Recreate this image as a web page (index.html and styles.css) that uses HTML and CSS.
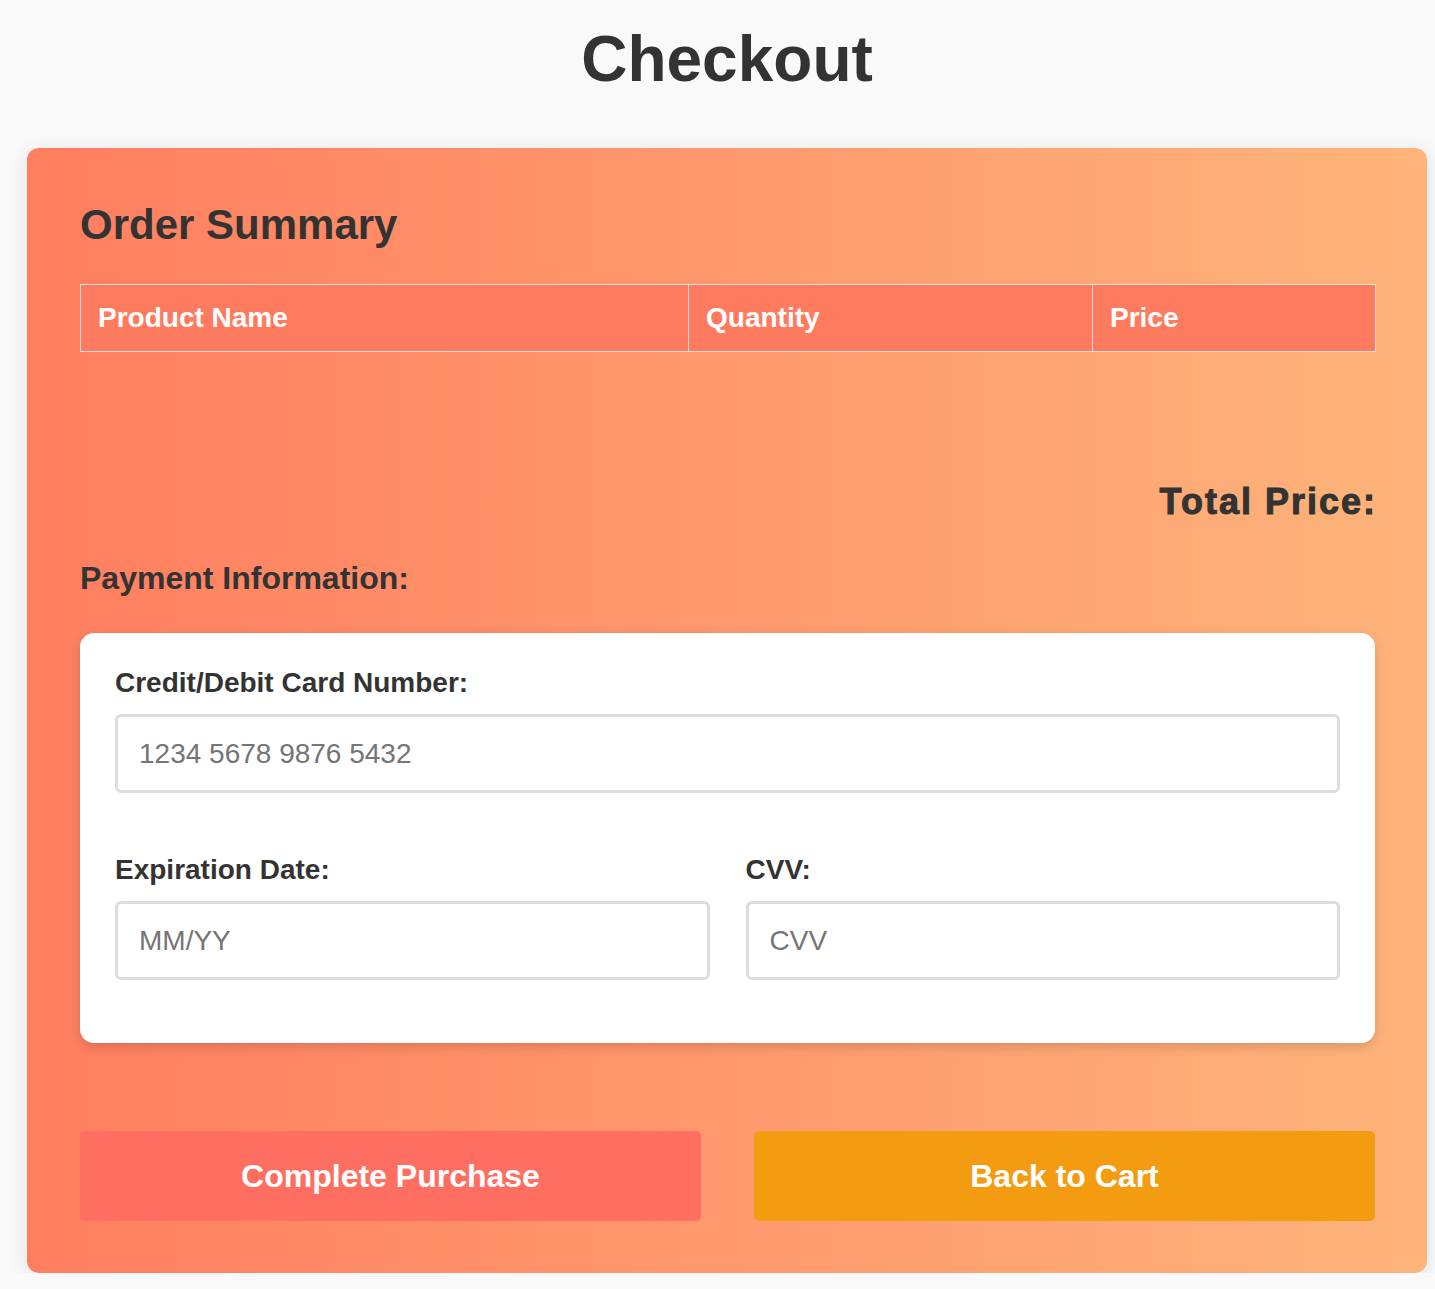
FILE: index.html
```html
<!DOCTYPE html>
<html lang="en">
<head>
<meta charset="utf-8">
<title>Checkout</title>
<link rel="stylesheet" href="styles.css">
</head>
<body>
<div class="page">
  <h1 class="title">Checkout</h1>
  <div class="checkout-card">
    <h2 class="section-title">Order Summary</h2>
    <table class="order-table">
      <colgroup>
        <col class="col-name">
        <col class="col-qty">
        <col class="col-price">
      </colgroup>
      <thead>
        <tr>
          <th>Product Name</th>
          <th>Quantity</th>
          <th>Price</th>
        </tr>
      </thead>
      <tbody></tbody>
    </table>
    <div class="total">Total Price: <span class="total-value"></span></div>
    <h3 class="payment-title">Payment Information:</h3>
    <form class="payment-form">
      <div class="form-group first">
        <label for="card">Credit/Debit Card Number:</label>
        <input id="card" type="text" placeholder="1234 5678 9876 5432">
      </div>
      <div class="form-row">
        <div class="form-group">
          <label for="exp">Expiration Date:</label>
          <input id="exp" type="text" placeholder="MM/YY">
        </div>
        <div class="form-group">
          <label for="cvv">CVV:</label>
          <input id="cvv" type="text" placeholder="CVV">
        </div>
      </div>
    </form>
    <div class="actions">
      <button class="btn btn-complete" type="button">Complete Purchase</button>
      <button class="btn btn-back" type="button">Back to Cart</button>
    </div>
  </div>
</div>
</body>
</html>
```

FILE: styles.css
```css
* {
  box-sizing: border-box;
}

html, body {
  margin: 0;
  padding: 0;
}

body {
  background: #f9f9f9;
  font-family: "Liberation Sans", Arial, sans-serif;
  color: #333;
}

.page {
  width: 1400px;
  margin-left: 27px;
  padding-top: 22px;
}

.title {
  margin: 0 0 52px;
  text-align: center;
  font-size: 64px;
  font-weight: 700;
  color: #333;
}

.checkout-card {
  background: linear-gradient(to right, #ff7e5f, #feb47b);
  border-radius: 12px;
  padding: 53px 52px 52px 53px;
  box-shadow: 0 4px 20px rgba(0, 0, 0, 0.1);
}

.section-title {
  margin: 0 0 35px;
  font-size: 42px;
  font-weight: 700;
  color: #333;
}

.order-table {
  width: 1295px;
  border-collapse: collapse;
  table-layout: fixed;
}

.col-name { width: 608px; }
.col-qty { width: 404px; }
.col-price { width: 283px; }

.order-table th {
  background: #ff7b5f;
  color: #fff;
  text-align: left;
  font-size: 28px;
  font-weight: 700;
  padding: 17px 17px;
  border: 1px solid #dcdcdc;
}

.total {
  margin-top: 129px;
  text-align: right;
  font-size: 36px;
  font-weight: 700;
  letter-spacing: 2px;
  color: #333;
  -webkit-text-stroke: 1px #333;
  margin-right: -2px;
}

.payment-title {
  margin: 37px 0 36px;
  font-size: 32px;
  font-weight: 700;
  color: #333;
}

.payment-form {
  background: #fff;
  border-radius: 14px;
  padding: 34px 35px 63px;
  box-shadow: 0 4px 12px rgba(0, 0, 0, 0.15);
}

.form-group label {
  display: block;
  font-size: 28px;
  font-weight: 700;
  color: #333;
  margin-bottom: 15px;
}

.form-group input {
  display: block;
  width: 100%;
  height: 79px;
  padding: 0 21px;
  border: 3px solid #ddd;
  border-radius: 6px;
  font-family: "Liberation Sans", Arial, sans-serif;
  font-size: 28px;
  color: #333;
  background: #fff;
  outline: none;
}

.form-group input::placeholder {
  color: #757575;
}

.form-group.first {
  margin-bottom: 61px;
}

.form-row {
  display: grid;
  grid-template-columns: 1fr 1fr;
  gap: 36px;
}

.actions {
  margin-top: 88px;
  display: grid;
  grid-template-columns: 1fr 1fr;
  gap: 53px;
}

.btn {
  height: 90px;
  border: none;
  border-radius: 5px;
  color: #fff;
  font-family: "Liberation Sans", Arial, sans-serif;
  font-size: 32px;
  font-weight: 700;
  cursor: pointer;
}

.btn-complete {
  background: #ff6f61;
}

.btn-back {
  background: #f39c12;
}
```
